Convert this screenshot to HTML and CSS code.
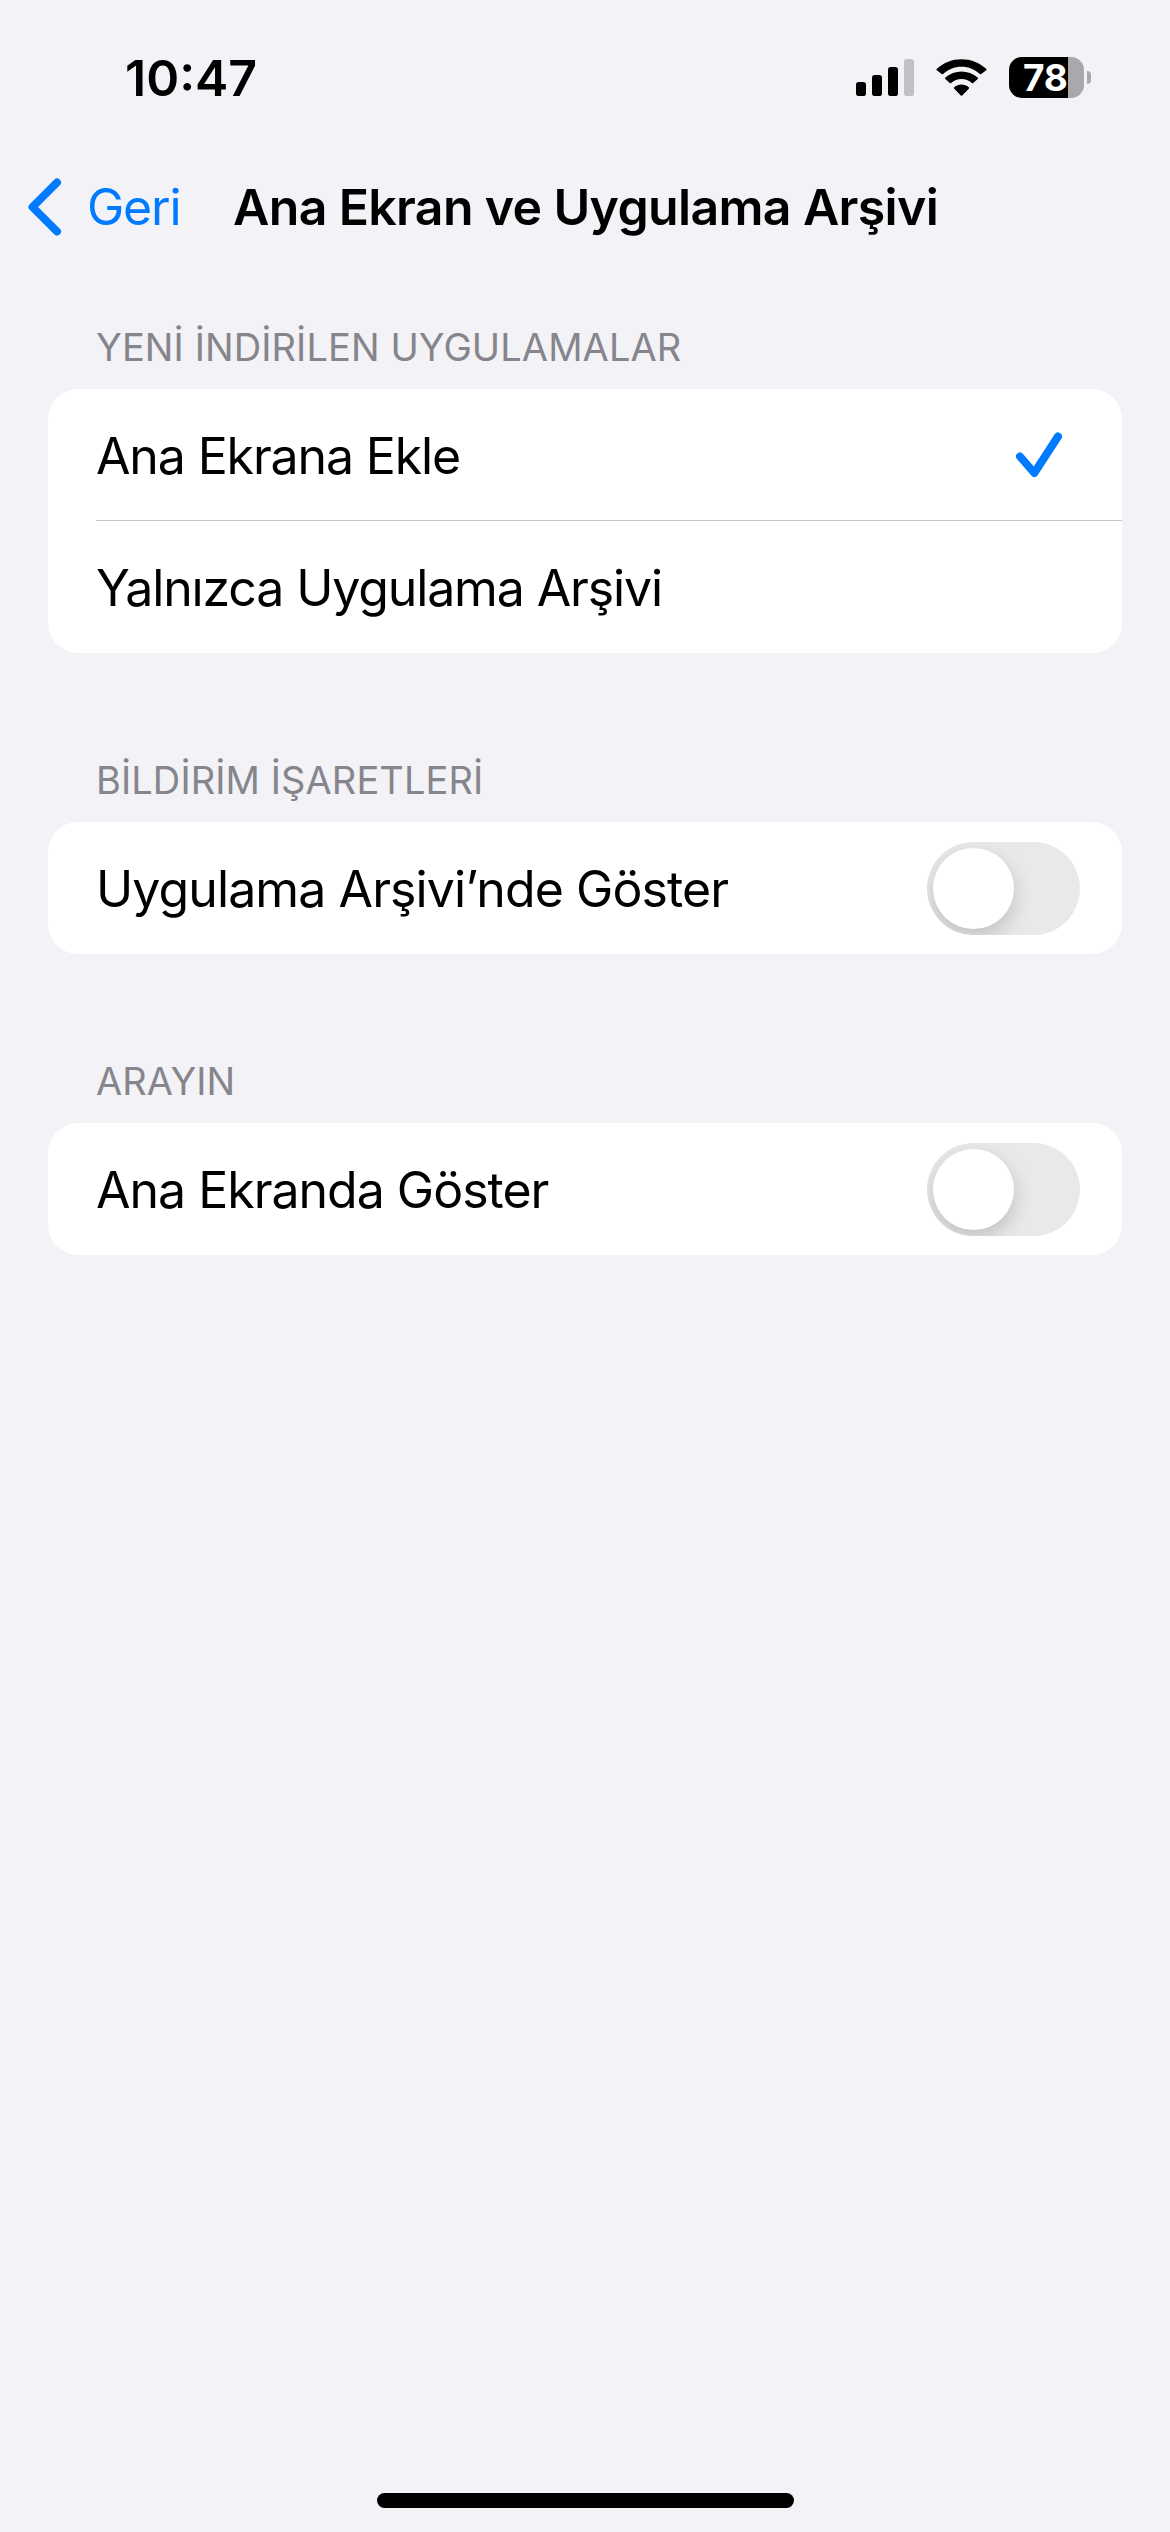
FILE: index.html
```html
<!DOCTYPE html>
<html lang="tr">
<head>
<meta charset="utf-8">
<title>Ana Ekran ve Uygulama Arşivi</title>
<link rel="stylesheet" href="styles.css">
</head>
<body>
<div class="screen">
  <header class="status">
    <span class="time">10:47</span>
    <div class="indicators">
      <svg class="signal" width="58" height="37" viewBox="0 0 58 37"><rect x="0" y="23" width="10" height="14" rx="2.800"/><rect x="16" y="16" width="10" height="21" rx="2.800"/><rect x="32" y="8" width="10" height="29" rx="2.800"/><rect x="48" y="0" width="10" height="37" rx="2.800" opacity=".2"/></svg>
      <svg class="wifi" width="51" height="37" viewBox="0.500 0 51 37"><path d="M26 7.700c7 0 13.500 2.700 18.400 7.300.4.400 1 .4 1.400 0l4.900-3.700c.4-.4.4-1.100 0-1.500C37.300-3.100 14.700-3.100 1.300 9.800c-.4.400-.4 1.100 0 1.500l4.900 3.700c.4.400 1 .4 1.400 0C12.500 10.400 19 7.700 26 7.700z"/><path d="M26 20c3.900 0 7.500 1.400 10.300 3.900.4.400 1 .4 1.400 0l4.500-3.900c.4-.4.4-1.100 0-1.500-9.300-8-23.100-8-32.400 0-.4.400-.4 1.100 0 1.500l4.500 3.900c.4.400 1 .4 1.400 0C18.500 21.400 22.100 20 26 20z"/><path d="M33.300 28.200c.4.400.4 1.100 0 1.500l-6.600 6.700c-.4.400-1 .4-1.400 0l-6.600-6.700c-.4-.4-.4-1.100 0-1.500 4.200-3.700 10.400-3.700 14.600 0z"/></svg>
      <div class="battery"><span class="level">78</span><i class="cap"></i></div>
    </div>
  </header>
  <nav class="navbar">
    <a class="back"><svg width="36" height="60" viewBox="0 0 36 60"><path d="M30 5.500 5.500 30 30 54.500"/></svg><span class="back-label">Geri</span></a>
    <h1 class="title">Ana Ekran ve Uygulama Arşivi</h1>
  </nav>
  <main class="groups">
    <section class="group">
      <h2 class="heading">YENİ İNDİRİLEN UYGULAMALAR</h2>
      <div class="card">
        <div class="row"><span class="label">Ana Ekrana Ekle</span><svg class="check" width="46" height="46" viewBox="0 0 46 46"><path d="M4 24.500 18.300 41 42 4.500"/></svg></div>
        <div class="row"><span class="label">Yalnızca Uygulama Arşivi</span></div>
      </div>
    </section>
    <section class="group">
      <h2 class="heading">BİLDİRİM İŞARETLERİ</h2>
      <div class="card">
        <div class="row"><span class="label label-library">Uygulama Arşivi’nde Göster</span><span class="switch"><i class="knob"></i></span></div>
      </div>
    </section>
    <section class="group">
      <h2 class="heading">ARAYIN</h2>
      <div class="card">
        <div class="row"><span class="label label-home">Ana Ekranda Göster</span><span class="switch"><i class="knob"></i></span></div>
      </div>
    </section>
  </main>
  <div class="home-bar"></div>
</div>
</body>
</html>
```

FILE: styles.css
```css
* { box-sizing: border-box; }
body { margin: 0; background: #f2f2f7; font-family: Inter, sans-serif; color: #000; }
.screen { width: 1170px; height: 2532px; display: flex; flex-direction: column; align-items: center; overflow: hidden; white-space: nowrap; }
.status { width: 100%; height: 141px; padding: 14px 79px 0 125px; display: flex; align-items: center; justify-content: space-between; }
.time { font-size: 50px; font-weight: 600; letter-spacing: 0; }
.indicators { display: flex; align-items: center; gap: 22px; }
.battery { display: flex; align-items: center; gap: 3px; }
.level { width: 75px; height: 41px; padding-left: 14px; border-radius: 13px; background: linear-gradient(90deg, #000 59px, #a9a9ac 59px); color: #fff; font-size: 37px; font-weight: 650; letter-spacing: -.3px; line-height: 41px; }
.cap { width: 4px; height: 13px; border-radius: 0 4px 4px 0; background: #a9a9ac; }
.navbar { width: 100%; height: 132px; padding-left: 27px; display: flex; align-items: center; }
.back { width: 206px; display: flex; align-items: center; gap: 24px; color: #007aff; font-size: 50px; letter-spacing: -1.2px; }
.back path, .check path { fill: none; stroke: #007aff; stroke-width: 8; stroke-linecap: round; stroke-linejoin: round; }
.title { margin: 0; font-size: 50px; font-weight: 600; letter-spacing: -.65px; }
.groups { width: 1074px; }
.group { margin-bottom: 105px; }
.heading { height: 116px; margin: 0; padding: 52px 0 0 48px; font-size: 38px; font-weight: 400; line-height: 44px; letter-spacing: .1px; color: #85858b; }
.group + .group .heading { height: 64px; padding-top: 0; }
.card { border-radius: 30px; background: #fff; }
.row { height: 132px; margin-left: 48px; padding-right: 42px; display: flex; align-items: center; justify-content: space-between; font-size: 50px; letter-spacing: -1.13px; }
.row:not(:last-child) { height: 131px; }
.row + .row { height: 133px; border-top: 1px solid #c6c6c8; }
.label { padding-top: 2px; }
.label-library { letter-spacing: -.9px; }
.label-home { letter-spacing: -1px; }
.check { margin-right: 18px; }
.switch { width: 153px; height: 93px; margin-top: 1px; padding: 6px; border-radius: 47px; background: #e9e9ea; overflow: hidden; }
.knob { display: block; width: 81px; height: 81px; border-radius: 50%; background: #fff; box-shadow: 0 8px 20px rgba(0,0,0,.18); }
.home-bar { width: 417px; height: 15px; margin: auto 0 24px; border-radius: 8px; background: #000; }
```
